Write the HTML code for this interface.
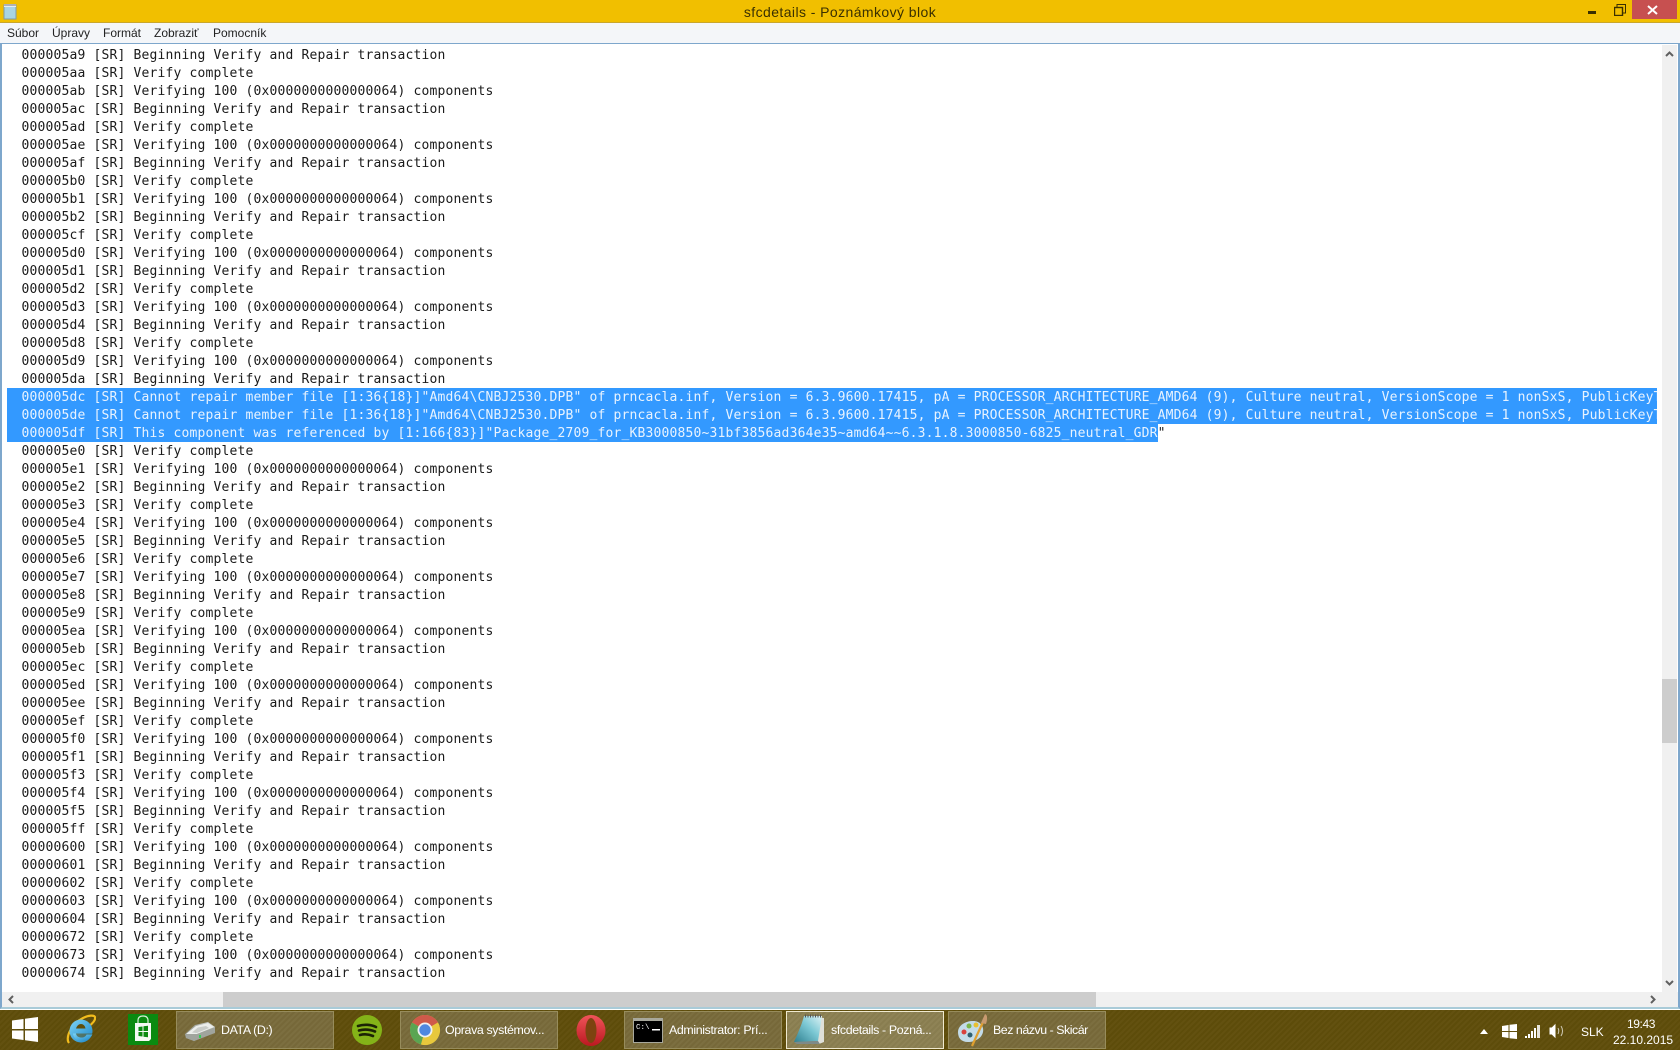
<!DOCTYPE html>
<html lang="sk"><head><meta charset="utf-8"><title>sfcdetails - Poznámkový blok</title>
<style>
html,body{margin:0;padding:0;width:1680px;height:1050px;overflow:hidden;background:#fff;font-family:"Liberation Sans",sans-serif}
div,span,svg{position:absolute;display:block}
#title{left:0;top:0;width:1680px;height:22px;background:#f1bf00;border-bottom:1px solid #c9a62c}
#ttext{left:0;width:1680px;top:3px;text-align:center;font-size:14px;line-height:18px;color:#3a3000;letter-spacing:.42px}
#close{left:1632px;top:0;width:45px;height:19px;background:#c75050}
#menu{left:0;top:23px;width:1680px;height:20px;background:#f4f6f9}
#menu span{top:2px;font-size:12px;line-height:16px;color:#222}
#frame{left:0;top:43px;width:1680px;height:966px;box-sizing:border-box;border:1px solid #7ea7cc;border-left:2px solid #7ea7cc;border-right:2px solid #7ea7cc;border-bottom:2px solid #a9cbd8;background:#fff}
.sel{background:#3399ff;left:7px;height:18px}
#txt{left:21.5px;top:47px;width:1635.5px;height:944px;overflow:hidden;font:13px/18px "DejaVu Sans Mono","Liberation Mono",monospace;letter-spacing:.174px;color:#1a1a1a;white-space:pre}
#txt b{font-weight:normal;color:#e8f3ff}
#vs{left:1662px;top:45px;width:15px;height:947px;background:#f0f0f0}
#vt{left:1662px;top:679px;width:15px;height:64px;background:#cdcdcd}
#hs{left:2px;top:992px;width:1676px;height:15px;background:#f0f0f0}
#ht{left:223px;top:992px;width:873px;height:15px;background:#cdcdcd}
#bar{left:0;top:1010px;width:1680px;height:40px;background:#5f4d0a;background-image:repeating-linear-gradient(135deg,rgba(255,255,255,.025) 0 2px,rgba(0,0,0,.02) 2px 4px)}
.btn{top:1011px;width:158px;height:38px;box-sizing:border-box;background:#786a3a;border:1px solid #978c5c;background-image:repeating-linear-gradient(135deg,rgba(255,255,255,.03) 0 2px,rgba(0,0,0,.02) 2px 4px)}
.act{background-color:#8b7f51;border-color:#efe9cf}
.tb{top:1022px;font-size:12.4px;line-height:16px;color:#fff;white-space:nowrap;letter-spacing:-.37px}
.tr{color:#fff;font-size:12px;line-height:16px;white-space:nowrap}
</style></head><body>
<div id="title"><div id="ttext">sfcdetails - Poznámkový blok</div></div>
<svg style="left:2px;top:3px" width="16" height="17" viewBox="0 0 16 17"><rect x="2" y="2" width="12" height="14" fill="#a9d4e4" stroke="#7f9aa6"/><rect x="2" y="1" width="12" height="3" fill="#e8eef0"/><path d="M3 1v2M5 1v2M7 1v2M9 1v2M11 1v2M13 1v2" stroke="#777"/></svg>
<svg style="left:1588px;top:11px" width="8" height="3"><rect width="8" height="3" fill="#3a2f00"/></svg>
<svg style="left:1614px;top:4px" width="12" height="12" viewBox="0 0 12 12" fill="none" stroke="#3a2f00"><path d="M3 3V.5h8.500V9H9"/><rect x=".5" y="3.500" width="8" height="8" stroke-width="1.400"/></svg>
<div id="close"></div>
<svg style="left:1647px;top:5px" width="11" height="10" viewBox="0 0 11 10"><path d="M1 1l9 8M10 1L1 9" stroke="#fff" stroke-width="2"/></svg>
<div id="menu"><span style="left:7px">Súbor</span><span style="left:52px">Úpravy</span><span style="left:103px">Formát</span><span style="left:154px">Zobraziť</span><span style="left:213px">Pomocník</span></div>
<div id="frame"></div>
<div class="sel" style="top:388px;width:1650px"></div>
<div class="sel" style="top:406px;width:1650px"></div>
<div class="sel" style="top:424px;width:1151px"></div>
<div id="txt">000005a9 [SR] Beginning Verify and Repair transaction
000005aa [SR] Verify complete
000005ab [SR] Verifying 100 (0x0000000000000064) components
000005ac [SR] Beginning Verify and Repair transaction
000005ad [SR] Verify complete
000005ae [SR] Verifying 100 (0x0000000000000064) components
000005af [SR] Beginning Verify and Repair transaction
000005b0 [SR] Verify complete
000005b1 [SR] Verifying 100 (0x0000000000000064) components
000005b2 [SR] Beginning Verify and Repair transaction
000005cf [SR] Verify complete
000005d0 [SR] Verifying 100 (0x0000000000000064) components
000005d1 [SR] Beginning Verify and Repair transaction
000005d2 [SR] Verify complete
000005d3 [SR] Verifying 100 (0x0000000000000064) components
000005d4 [SR] Beginning Verify and Repair transaction
000005d8 [SR] Verify complete
000005d9 [SR] Verifying 100 (0x0000000000000064) components
000005da [SR] Beginning Verify and Repair transaction
<b>000005dc [SR] Cannot repair member file [1:36{18}]"Amd64\CNBJ2530.DPB" of prncacla.inf, Version = 6.3.9600.17415, pA = PROCESSOR_ARCHITECTURE_AMD64 (9), Culture neutral, VersionScope = 1 nonSxS, PublicKeyToken</b>
<b>000005de [SR] Cannot repair member file [1:36{18}]"Amd64\CNBJ2530.DPB" of prncacla.inf, Version = 6.3.9600.17415, pA = PROCESSOR_ARCHITECTURE_AMD64 (9), Culture neutral, VersionScope = 1 nonSxS, PublicKeyToken</b>
<b>000005df [SR] This component was referenced by [1:166{83}]"Package_2709_for_KB3000850~31bf3856ad364e35~amd64~~6.3.1.8.3000850-6825_neutral_GDR</b>"
000005e0 [SR] Verify complete
000005e1 [SR] Verifying 100 (0x0000000000000064) components
000005e2 [SR] Beginning Verify and Repair transaction
000005e3 [SR] Verify complete
000005e4 [SR] Verifying 100 (0x0000000000000064) components
000005e5 [SR] Beginning Verify and Repair transaction
000005e6 [SR] Verify complete
000005e7 [SR] Verifying 100 (0x0000000000000064) components
000005e8 [SR] Beginning Verify and Repair transaction
000005e9 [SR] Verify complete
000005ea [SR] Verifying 100 (0x0000000000000064) components
000005eb [SR] Beginning Verify and Repair transaction
000005ec [SR] Verify complete
000005ed [SR] Verifying 100 (0x0000000000000064) components
000005ee [SR] Beginning Verify and Repair transaction
000005ef [SR] Verify complete
000005f0 [SR] Verifying 100 (0x0000000000000064) components
000005f1 [SR] Beginning Verify and Repair transaction
000005f3 [SR] Verify complete
000005f4 [SR] Verifying 100 (0x0000000000000064) components
000005f5 [SR] Beginning Verify and Repair transaction
000005ff [SR] Verify complete
00000600 [SR] Verifying 100 (0x0000000000000064) components
00000601 [SR] Beginning Verify and Repair transaction
00000602 [SR] Verify complete
00000603 [SR] Verifying 100 (0x0000000000000064) components
00000604 [SR] Beginning Verify and Repair transaction
00000672 [SR] Verify complete
00000673 [SR] Verifying 100 (0x0000000000000064) components
00000674 [SR] Beginning Verify and Repair transaction</div>
<div id="vs"></div><div id="vt"></div><div id="hs"></div><div id="ht"></div>
<svg style="left:1665px;top:51px" width="9" height="6" viewBox="0 0 9 6"><path d="M1 5l3.500-3.500L8 5" fill="none" stroke="#606060" stroke-width="2"/></svg>
<svg style="left:1665px;top:980px" width="9" height="6" viewBox="0 0 9 6"><path d="M1 1l3.500 3.500L8 1" fill="none" stroke="#606060" stroke-width="2"/></svg>
<svg style="left:8px;top:995px" width="6" height="9" viewBox="0 0 6 9"><path d="M5 1L1.500 4.500 5 8" fill="none" stroke="#606060" stroke-width="2"/></svg>
<svg style="left:1650px;top:995px" width="6" height="9" viewBox="0 0 6 9"><path d="M1 1l3.500 3.500L1 8" fill="none" stroke="#606060" stroke-width="2"/></svg>

<div id="bar"></div>
<svg style="left:12px;top:1017px" width="26" height="25" viewBox="0 0 26 25" fill="#fff"><path d="M0 3.500L11.500 2v10H0zM13 1.800L26 0v12H13zM0 13.500h11.500V23L0 21.500zM13 13.500h13V25l-13-1.800z"/></svg>
<svg style="left:66px;top:1014px" width="30" height="31" viewBox="0 0 30 31"><defs><linearGradient id="ie" x1="0" y1="0" x2="1" y2="1"><stop offset="0" stop-color="#7fd4f4"/><stop offset="1" stop-color="#1b86c8"/></linearGradient></defs><path d="M3 29C-1 24 5 10 17 4c6-3 11-3 12-1 1 3-3 7-6 9" fill="none" stroke="#f2bc1c" stroke-width="2.200"/><circle cx="15" cy="17" r="11.500" fill="url(#ie)"/><path d="M10 14.500c1-3 3-4.500 5-4.500s4 1.500 4.500 4.500z" fill="#5f4d0a"/><path d="M10 19.500c.5 3 3 4 5.500 4s4-1 5-3h6c-2 4-6 6.500-11 6.500-5 0-8-3-8.500-7.500z" fill="url(#ie)"/><path d="M10 19.500h16l.3 1H20.500c-1 2-2.500 3-5 3s-5-1-5.500-4z" fill="#5f4d0a" opacity=".55"/></svg>
<svg style="left:128px;top:1014px" width="30" height="31" viewBox="0 0 30 31"><rect width="30" height="31" fill="#0a8a10"/><path d="M10 9V6.500C10 3 12 2 15 2s5 1 5 4.500V9" fill="none" stroke="#d8f0d8" stroke-width="1.200"/><path d="M7 9h16v16l-2 2H7z" fill="#f4faf4"/><path d="M10.500 13l4-.5V17h-4zM15.500 12.300l4.500-.6V17h-4.500zM10.500 18h4v4.500l-4-.5zM15.500 18H20v5.300l-4.500-.6z" fill="#0a8a10"/></svg>
<div class="btn" style="left:176px"></div>
<svg style="left:185px;top:1022px" width="31" height="20" viewBox="0 0 31 20"><defs><linearGradient id="dr" x1="0" y1="0" x2="1" y2="0"><stop offset="0" stop-color="#8f948d"/><stop offset="1" stop-color="#d5d8d3"/></linearGradient></defs><path d="M0 12L10 3 23 0l7 5-1 6-20 8-8-3z" fill="url(#dr)"/><path d="M1 12l10-8 12-3 6 4-17 7z" fill="#eceeeb"/><path d="M7 10.500l6-5 8-1.500 3 2-12 5z" fill="#c9ccc8"/><path d="M0 12l12 0 18-7v6L9 19l-8-3z" fill="#a0a49d"/><rect x="14" y="13" width="2" height="3" fill="#35d058"/></svg>
<div class="tb" style="left:221px;">DATA (D:)</div>
<svg style="left:352px;top:1015px" width="30" height="30" viewBox="0 0 30 30"><circle cx="15" cy="15" r="15" fill="#84b318"/><path d="M6 11c6-2 13-1.500 18 1M7 15.500c5-1.500 11-1 16 1M8 20c4-1 9-.7 13 1" fill="none" stroke="#1c2405" stroke-width="2.600" stroke-linecap="round"/></svg>
<div class="btn" style="left:400px"></div>
<svg style="left:410px;top:1015px" width="30" height="30" viewBox="0 0 30 30"><circle cx="15" cy="15" r="15" fill="#d8c03a"/><path d="M15 15L2 7.500A15 15 0 0 1 28 7.500z" fill="#cf5a4a"/><path d="M15 15L2 7.500A15 15 0 0 0 11 29.500z" fill="#5aa552"/><path d="M15 15l13-7.500A15 15 0 0 1 11 29.500z" fill="#e8c83c"/><circle cx="15" cy="15" r="7.500" fill="#f0f0f0"/><circle cx="15" cy="15" r="5.700" fill="#4f88e0"/></svg>
<div class="tb" style="left:445px;">Oprava systémov...</div>
<svg style="left:576px;top:1015px" width="30" height="31" viewBox="0 0 30 31"><defs><linearGradient id="op" x1="0" y1="0" x2="0" y2="1"><stop offset="0" stop-color="#f0545a"/><stop offset="1" stop-color="#bb1820"/></linearGradient></defs><ellipse cx="15" cy="15.500" rx="14.500" ry="15.500" fill="url(#op)"/><ellipse cx="15" cy="15.500" rx="5.500" ry="12.500" fill="#7d4310"/></svg>
<div class="btn" style="left:624px"></div>
<svg style="left:633px;top:1018px" width="30" height="25" viewBox="0 0 30 25"><rect width="30" height="25" fill="#a8a89c"/><rect x="1" y="3" width="28" height="21" fill="#000"/><text x="3" y="11" fill="#fff" font-family="Liberation Mono,monospace" font-size="7.500">C:\</text><rect x="19" y="11" width="8" height="1.500" fill="#fff"/></svg>
<div class="tb" style="left:669px;">Administrator: Prí...</div>
<div class="btn act" style="left:786px"></div>
<svg style="left:794px;top:1013px" width="32" height="33" viewBox="0 0 32 33"><defs><linearGradient id="np" x1="0" y1="1" x2="1" y2="0"><stop offset="0" stop-color="#2f8090"/><stop offset=".55" stop-color="#7cc8d4"/><stop offset="1" stop-color="#dff3f5"/></linearGradient></defs><path d="M11 3L30 5v24l-5 2z" fill="#dfe0d8"/><path d="M10 3h18L24 28 0 29C4 20 8 11 10 3z" fill="url(#np)"/><path d="M0 29l24-1 2 3H3z" fill="#7d8a88"/><path d="M11 3h17" stroke="#555" stroke-width="3" stroke-dasharray="1 1.500"/></svg>
<div class="tb" style="left:831px;">sfcdetails - Pozná...</div>
<div class="btn" style="left:948px"></div>
<svg style="left:957px;top:1013px" width="31" height="34" viewBox="0 0 31 34"><path d="M1 19C1 12 9 8 16 8s11 5 10 11-8 10-15 10S1 25 1 19z" fill="#c3dbe8"/><circle cx="7" cy="19" r="2.500" fill="#d8403c"/><circle cx="12" cy="13" r="2.500" fill="#7ab648"/><circle cx="19" cy="12" r="2.500" fill="#e8c030"/><circle cx="13" cy="22" r="2.500" fill="#2f5f70"/><path d="M15 33L26 9" stroke="#e0a030" stroke-width="2.200"/><path d="M24 10L28 1c2 1 3 3 1 10z" fill="#c89a70"/></svg>
<div class="tb" style="left:993px;letter-spacing:-.47px">Bez názvu - Skicár</div>

<svg style="left:1480px;top:1029px" width="8" height="5" viewBox="0 0 8 5"><path d="M0 5L4 0l4 5z" fill="#fff"/></svg>
<svg style="left:1502px;top:1024px" width="15" height="15" viewBox="0 0 15 15" fill="#fff"><path d="M0 2l6.500-1v6H0zM7.500 .8L15 0v7H7.500zM0 8h6.500v6L0 13zM7.500 8H15v7l-7.500-.8z"/></svg>
<svg style="left:1525px;top:1024px" width="16" height="15" viewBox="0 0 16 15" fill="#fff"><rect y="12" width="2" height="2"/><rect x="3" y="10" width="2" height="4"/><rect x="6" y="7" width="2" height="7"/><rect x="9" y="4" width="2" height="10"/><rect x="12" y="1" width="3" height="13" opacity=".85"/></svg>
<svg style="left:1549px;top:1023px" width="16" height="16" viewBox="0 0 16 16" fill="none" stroke="#fff"><path d="M1 5h2l3-3v12l-3-3H1z" fill="#fff"/><path d="M9 5c1 2 1 4 0 6M12 3c2 3 2 7 0 10" stroke-opacity=".7"/></svg>
<div class="tr" style="left:1581px;top:1024px">SLK</div>
<div class="tr" style="left:1627px;top:1016px;letter-spacing:-.4px">19:43</div>
<div class="tr" style="left:1613px;top:1032px">22.10.2015</div>
</body></html>
